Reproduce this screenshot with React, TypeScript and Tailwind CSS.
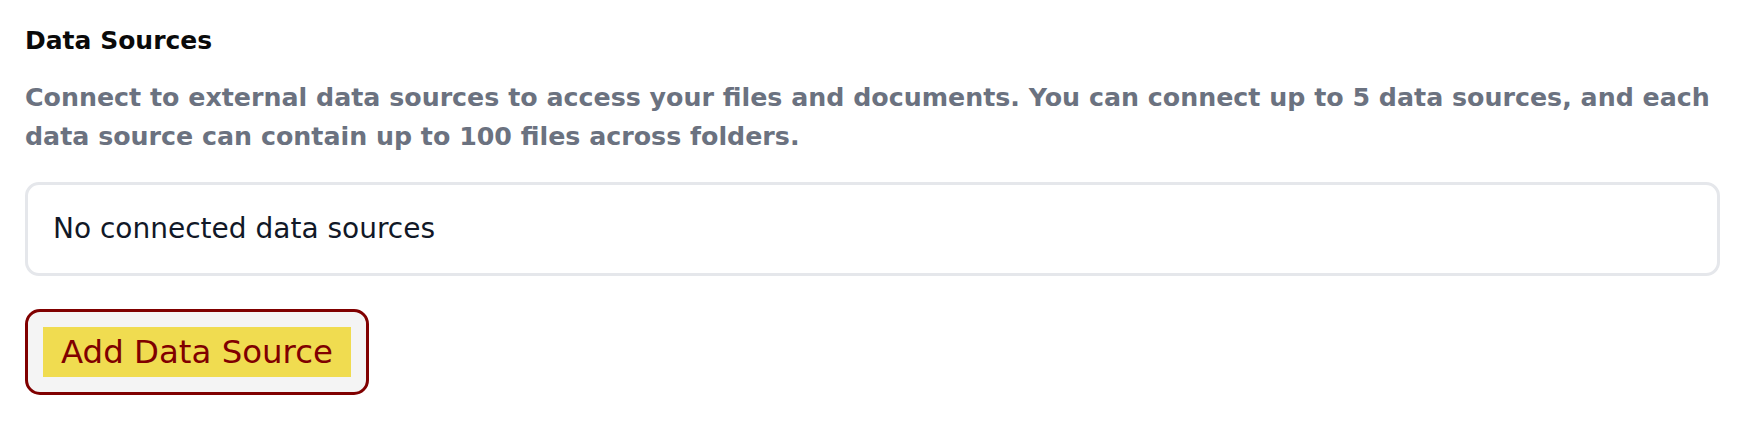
import React from "react";

export default function App() {
  return (
    <div className="min-h-[436px] w-full bg-white pl-[25px] pr-[36px] pt-[25px] font-['DejaVu_Sans',sans-serif]">
      <h2 className="text-[25px] font-bold leading-[32px] text-[#0a0a0a]">Data Sources</h2>
      <p className="mt-[21px] text-[25.3px] font-bold leading-[39px] text-[#6b7280]">
        Connect to external data sources to access your files and documents. You can connect up to 5 data sources, and
        each data source can contain up to 100 files across folders.
      </p>
      <div className="mt-[26px] rounded-[14px] border-[3px] border-[#e5e7eb] bg-white px-[25px] py-[26px]">
        <p className="text-[28px] font-normal leading-[36px] text-[#111827]">No connected data sources</p>
      </div>
      <div className="mt-[33px] flex">
        <button
          type="button"
          className="rounded-[15px] border-[3px] border-[#800000] bg-[#f4f4f4] p-[15px]"
        >
          <span className="block bg-[#f0dc50] px-[18px] text-[32.4px] font-normal leading-[50px] text-[#800000]">
            Add Data Source
          </span>
        </button>
      </div>
    </div>
  );
}
